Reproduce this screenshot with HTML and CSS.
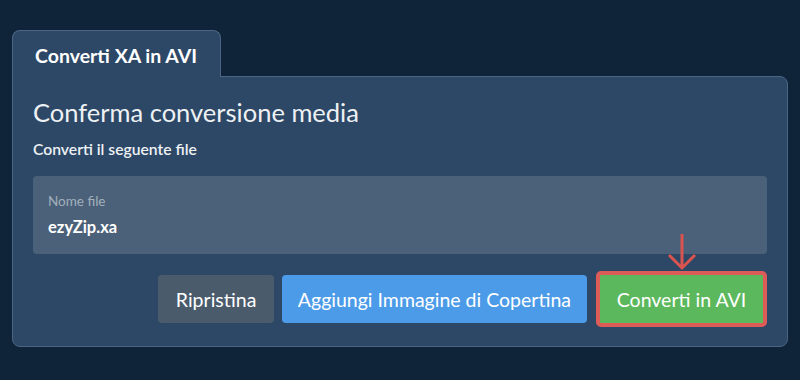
FILE: index.html
```html
<!DOCTYPE html>
<html lang="it">
<head>
  <meta charset="UTF-8">
  <title>Converti XA in AVI</title>
  <link rel="stylesheet" href="styles.css">
</head>
<body>
  <div class="wrap">
    <div class="tab">Converti XA in AVI</div>
    <div class="panel">
      <h2>Conferma conversione media</h2>
      <div class="sub">Converti il seguente file</div>

      <div class="file-box">
        <div class="file-label">Nome file</div>
        <div class="file-name">ezyZip.xa</div>
      </div>

      <div class="actions">
        <button class="btn btn-reset">Ripristina</button>
        <button class="btn btn-cover">Aggiungi Immagine di Copertina</button>
        <div class="convert-wrap">
          <svg class="arrow" width="30" height="38" viewBox="0 0 30 38">
            <path d="M15 1 V35 M2 22 L15 35 L28 22" fill="none" stroke="#d9534f" stroke-width="3"/>
          </svg>
          <button class="btn btn-convert">Converti in AVI</button>
        </div>
      </div>
    </div>
  </div>
</body>
</html>
```

FILE: styles.css
```css
body {
  margin: 0;
  background: #0f2339;
  font-family: Lato, 'Noto Sans', sans-serif;
  color: #fff;
}

.wrap {
  padding: 30px 12px;
}

.tab {
  display: inline-block;
  box-sizing: border-box;
  width: 209px;
  height: 47px;
  padding: 0 22px;
  line-height: 50px;
  font-size: 19.5px;
  font-weight: bold;
  background: #2c4866;
  border: 1px solid #4b6684;
  border-bottom: none;
  border-radius: 8px 8px 0 0;
  position: relative;
  z-index: 1;
  margin-bottom: -1px;
}

.panel {
  background: #2c4866;
  border: 1px solid #4b6684;
  border-radius: 0 8px 8px 8px;
  padding: 20px 20px 19px;
}

h2 {
  margin: 0;
  font-size: 25.5px;
  font-weight: normal;
  line-height: 1.2;
  color: #eef1f4;
}

.sub {
  margin-top: 12px;
  font-size: 15.7px;
  font-weight: 600;
  line-height: 1.2;
  color: #eef1f4;
}

.file-box {
  margin-top: 18px;
  background: #4b6179;
  border-radius: 4px;
  padding: 17px 15px;
}

.file-label {
  font-size: 13.5px;
  line-height: 1.2;
  color: #a3afbd;
}

.file-name {
  margin-top: 8px;
  font-size: 16.5px;
  font-weight: bold;
  line-height: 1.2;
}

.actions {
  margin-top: 17px;
  display: flex;
  justify-content: flex-end;
  align-items: center;
  gap: 8px;
}

.btn {
  height: 48px;
  padding: 0 17.5px;
  border: none;
  border-radius: 4px;
  font-family: inherit;
  font-size: 19.5px;
  color: #fff;
  cursor: pointer;
}

.btn-reset {
  background: #4a5b6c;
}

.btn-cover {
  background: #4c9be8;
  padding: 0 16px;
}

.convert-wrap {
  position: relative;
  margin-left: 1px;
}

.btn-convert {
  display: block;
  box-sizing: content-box;
  width: 163px;
  padding: 0;
  background: #5cb85c;
  border: 4px solid #dc5c58;
  border-radius: 5px;
}

.arrow {
  position: absolute;
  left: 71px;
  top: -38px;
}
```
